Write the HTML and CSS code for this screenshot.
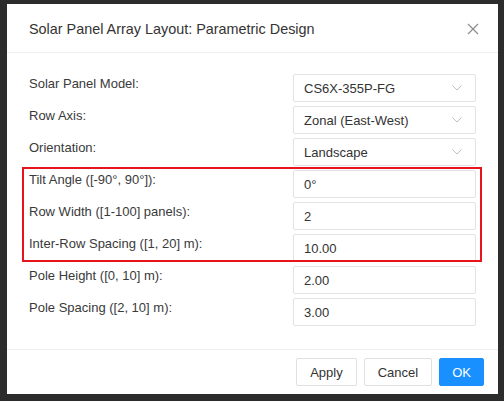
FILE: index.html
```html
<!DOCTYPE html>
<html lang="en">
<head>
<meta charset="utf-8">
<title>Solar Panel Array Layout</title>
<link rel="stylesheet" href="styles.css">
</head>
<body>
<div class="modal">
  <div class="modal-header">
    <span class="modal-title">Solar Panel Array Layout: Parametric Design</span>
    <svg class="close" width="12" height="12" viewBox="0 0 12 12"><path d="M1 1 L11 11 M11 1 L1 11" stroke="#8c8c8c" stroke-width="1.2" fill="none"/></svg>
  </div>
  <div class="modal-body">
    <div class="form">
      <label class="label">Solar Panel Model:</label>
      <div class="field select"><span>CS6X-355P-FG</span><svg class="chev" width="10" height="6" viewBox="0 0 10 6"><path d="M0.5 0.5 L5 5 L9.5 0.5" stroke="#bfbfbf" stroke-width="1" fill="none"/></svg></div>

      <label class="label">Row Axis:</label>
      <div class="field select"><span>Zonal (East-West)</span><svg class="chev" width="10" height="6" viewBox="0 0 10 6"><path d="M0.5 0.5 L5 5 L9.5 0.5" stroke="#bfbfbf" stroke-width="1" fill="none"/></svg></div>

      <label class="label">Orientation:</label>
      <div class="field select"><span>Landscape</span><svg class="chev" width="10" height="6" viewBox="0 0 10 6"><path d="M0.5 0.5 L5 5 L9.5 0.5" stroke="#bfbfbf" stroke-width="1" fill="none"/></svg></div>

      <label class="label">Tilt Angle ([-90°, 90°]):</label>
      <div class="field"><span>0°</span></div>

      <label class="label">Row Width ([1-100] panels):</label>
      <div class="field"><span>2</span></div>

      <label class="label">Inter-Row Spacing ([1, 20] m):</label>
      <div class="field"><span>10.00</span></div>

      <label class="label">Pole Height ([0, 10] m):</label>
      <div class="field"><span>2.00</span></div>

      <label class="label">Pole Spacing ([2, 10] m):</label>
      <div class="field"><span>3.00</span></div>
    </div>
    <div class="highlight"></div>
  </div>
  <div class="modal-footer">
    <button class="btn">Apply</button>
    <button class="btn">Cancel</button>
    <button class="btn primary">OK</button>
  </div>
</div>
</body>
</html>
```

FILE: styles.css
```css
* { box-sizing: border-box; }

html, body {
  margin: 0;
  height: 100%;
}

body {
  background: #2b2c2b;
  padding: 4px 6px 7px 7px;
  font-family: "Liberation Sans", Arial, sans-serif;
  color: rgba(0, 0, 0, 0.85);
}

.modal {
  background: #fff;
  height: 390px;
  display: flex;
  flex-direction: column;
  position: relative;
}

.modal-header {
  display: flex;
  align-items: center;
  justify-content: space-between;
  padding: 14px 19px 12px 22px;
  border-bottom: 1px solid #eeeeee;
}

.modal-title {
  font-size: 14.4px;
  line-height: 22px;
  color: #333;
}

.close { display: block; }

.modal-body {
  padding: 21px 22px 0 22px;
  flex: 1;
  position: relative;
}

.form {
  display: grid;
  grid-template-columns: 1fr 183px;
  row-gap: 4px;
}

.label {
  font-size: 13px;
  line-height: 20px;
  color: #3a3a3a;
}

.field {
  height: 28px;
  border: 1px solid #e3e3e3;
  border-radius: 2px;
  display: flex;
  align-items: center;
  justify-content: space-between;
  padding: 0 11px 0 10px;
  font-size: 13px;
  color: #333;
}

.chev { display: block; margin-right: 2px; }

/* red outline around the geometry inputs */
.highlight {
  position: absolute;
  left: 15px;
  top: 114px;
  width: 460px;
  height: 95px;
  border: 2px solid #e8141b;
  pointer-events: none;
}

.modal-footer {
  border-top: 1px solid #eeeeee;
  padding: 8px 14px 8px;
  display: flex;
  justify-content: flex-end;
  gap: 7px;
}

.btn {
  height: 28px;
  padding: 0 13px;
  font-family: inherit;
  font-size: 13px;
  color: #333;
  background: #fff;
  border: 1px solid #e0e0e0;
  border-radius: 2px;
}

.btn.primary {
  background: #1890ff;
  border-color: #1890ff;
  color: #fff;
  padding: 0 12px;
}
```
